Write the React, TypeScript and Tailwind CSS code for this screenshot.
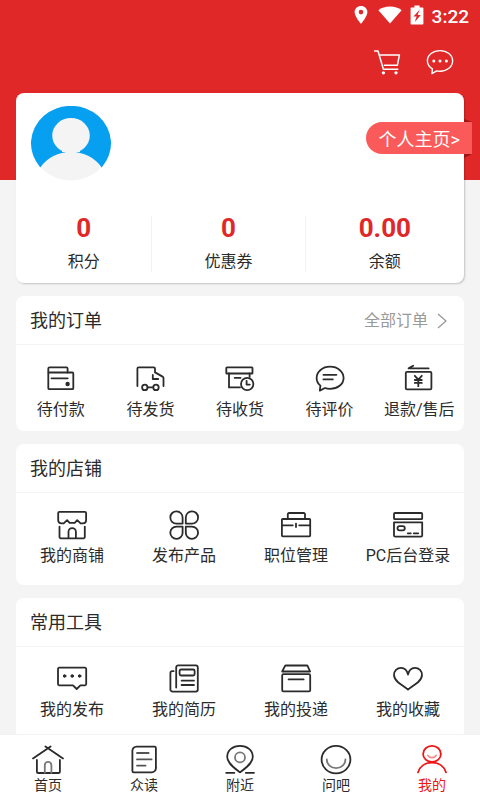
import React from 'react';

type Item = {
  label: string;
  icon: React.ReactNode;
};

const Icon = ({ children }: { children: React.ReactNode }) => (
  <svg
    viewBox="0 0 32 32"
    className="h-8 w-8 shrink-0"
    fill="none"
    stroke="currentColor"
    strokeWidth="1.8"
    strokeLinecap="round"
    strokeLinejoin="round"
    aria-hidden="true"
  >
    {children}
  </svg>
);

const stats = [
  { value: '0', label: '积分', width: 'flex-[136]' },
  { value: '0', label: '优惠券', width: 'flex-[153]' },
  { value: '0.00', label: '余额', width: 'flex-[159]' },
];

const orders: Item[] = [
  {
    label: '待付款',
    icon: (
      <Icon>
        <path d="M3.3 9.5V5.6a1.2 1.2 0 0 1 1.2-1.2h16.9a1.2 1.2 0 0 1 1.2 1.2v3.9" />
        <rect x="3.3" y="9.5" width="25" height="16.7" rx="1" />
        <path d="M6.5 15.3h16.2" />
        <circle cx="22.6" cy="21" r="1.3" fill="currentColor" />
      </Icon>
    ),
  },
  {
    label: '待发货',
    icon: (
      <Icon>
        <path d="M3.4 23V5.6a1.2 1.2 0 0 1 1.2-1.2h15.2A1.2 1.2 0 0 1 21 5.6v3.8l7.6 4.2a1.6 1.6 0 0 1 .9 1.4V23" />
        <path d="M18.8 12v4h5.4M13.6 24.4h5.6" />
        <circle cx="10.8" cy="24.4" r="2.7" />
        <circle cx="22" cy="24.4" r="2.7" />
      </Icon>
    ),
  },
  {
    label: '待收货',
    icon: (
      <Icon>
        <rect x="2.3" y="4.3" width="26.2" height="6.2" rx="0.6" />
        <path d="M5 10.5v13.9h11M25.6 10.5v3.4M10.6 14.8h6" />
        <circle cx="23.2" cy="21" r="6.2" />
        <path d="M22.6 18v3.6h3.2" />
      </Icon>
    ),
  },
  {
    label: '待评价',
    icon: (
      <Icon>
        <path d="M5.8 27.6l.6-5C3.9 20.6 2.6 17.9 2.6 15 2.6 8.6 8.6 3.7 16.1 3.7S29.6 8.6 29.6 15 23.6 25.8 16.1 25.8c-1.9 0-3.6-.2-5.1-.8z" />
        <path d="M9.4 11.8h13M9.4 16.4h9.4" />
      </Icon>
    ),
  },
  {
    label: '退款/售后',
    icon: (
      <Icon>
        <rect x="2.8" y="8.8" width="25.6" height="17.6" rx="1.2" />
        <path d="M25.6 5.4H5.6l4.6-2.7" />
        <path d="M11.8 12.8l3.5 3.8 3.5-3.8M11.8 17h7M11.8 19.9h7M15.3 16.6v6.6" />
      </Icon>
    ),
  },
];

const shop: Item[] = [
  {
    label: '我的商铺',
    icon: (
      <Icon>
        <path d="M2.2 4a1.2 1.2 0 0 1 1.2-1.2h25.5A1.2 1.2 0 0 1 30.1 4v7.2a3.3 3.3 0 0 1-3.3 3.2h-2.2l-3.4-3.2-2.5 2.7h-5.1l-2.5-2.7-3.4 3.2H5.5a3.3 3.3 0 0 1-3.3-3.2z" />
        <path d="M3.5 17.6v10.5a1.2 1.2 0 0 0 1.2 1.2h22.9a1.2 1.2 0 0 0 1.2-1.2V17.6M12.5 29.1v-6.3a3.7 3.7 0 0 1 7.4 0v6.3" />
      </Icon>
    ),
  },
  {
    label: '发布产品',
    icon: (
      <Icon>
        <path d="M14.6 14.6V8.7a6.15 6.15 0 1 0-6.15 5.9z" />
        <path d="M17.8 14.6V8.7a6.15 6.15 0 1 1 6.15 5.9z" />
        <path d="M14.6 17.6v5.9a6.15 6.15 0 1 1-6.15-5.9z" />
        <path d="M17.8 17.6v5.9a6.15 6.15 0 1 0 6.15-5.9z" />
      </Icon>
    ),
  },
  {
    label: '职位管理',
    icon: (
      <Icon>
        <path d="M7.8 10V5.2A1.2 1.2 0 0 1 9 4h14.8A1.2 1.2 0 0 1 25 5.2V10" />
        <rect x="1.9" y="10" width="28.3" height="17.4" rx="0.8" />
        <path d="M2 16.3h10.8M19.2 16.3h10.8M16 14.6v3.4" />
      </Icon>
    ),
  },
  {
    label: 'PC后台登录',
    icon: (
      <Icon>
        <rect x="2" y="4" width="28.2" height="6.2" rx="1" />
        <path d="M2 13.3h28.2v13.1a1.2 1.2 0 0 1-1.2 1.2H3.2A1.2 1.2 0 0 1 2 26.4z" />
        <rect x="5.5" y="17.2" width="7.3" height="4.2" rx="2.1" />
        <path d="M15.8 24.3h3M21.8 24.3h4.4" />
      </Icon>
    ),
  },
];

const tools: Item[] = [
  {
    label: '我的发布',
    icon: (
      <Icon>
        <path d="M3.2 4.7h25.8a1.2 1.2 0 0 1 1.2 1.2v15.2a1.2 1.2 0 0 1-1.2 1.2h-4.6L20.7 26 17 22.3H3.2A1.2 1.2 0 0 1 2 21.1V5.9a1.2 1.2 0 0 1 1.2-1.2z" />
        <g fill="currentColor" strokeWidth="1">
          <circle cx="8.6" cy="13" r="1.3" />
          <circle cx="16.2" cy="13" r="1.3" />
          <circle cx="23.6" cy="13" r="1.3" />
        </g>
      </Icon>
    ),
  },
  {
    label: '我的简历',
    icon: (
      <Icon>
        <path d="M8.2 24.6V4.4a2 2 0 0 1 2-2h17.6a2 2 0 0 1 2 2v22.2a2 2 0 0 1-2 2H4.6a2.2 2.2 0 0 1-2.2-2.2V10a1.8 1.8 0 0 1 1.8-1.8h1.4" />
        <rect x="11.6" y="6.5" width="15" height="6" rx="1.4" />
        <path d="M13.6 17.6h12.4M13.6 22h12.4" />
      </Icon>
    ),
  },
  {
    label: '我的投递',
    icon: (
      <Icon>
        <path d="M6 2.5h20.6a1.4 1.4 0 0 1 1.2.8l2.3 5.2H2.2l2.6-5.2A1.4 1.4 0 0 1 6 2.5z" />
        <rect x="2.2" y="11.2" width="28" height="17.2" rx="1.2" />
        <path d="M8.6 16.4h15" />
      </Icon>
    ),
  },
  {
    label: '我的收藏',
    icon: (
      <Icon>
        <path d="M16 11.6C15.2 7.6 12.6 4.8 9.1 4.8 5 4.8 2 8 2 12.1c0 3 1.6 5 4 7.1 3.2 2.8 6.6 4.5 10 7.5 3.4-3 6.8-4.7 10-7.5 2.4-2.1 4-4.1 4-7.1 0-4.1-3-7.3-7.1-7.3-3.5 0-6.1 2.8-6.9 6.8z" />
      </Icon>
    ),
  },
];

const tabs: Item[] = [
  {
    label: '首页',
    icon: (
      <Icon>
        <path d="M1 14.4L18.6 2.4M31 14.4L13.4 2.4" />
        <path d="M4.9 16v11.4a1.6 1.6 0 0 0 1.6 1.6h19.8a1.6 1.6 0 0 0 1.6-1.6V16" />
        <path d="M12.8 28.8v-7.6a3.3 3.3 0 0 1 6.6 0v7.6" stroke="#777" />
      </Icon>
    ),
  },
  {
    label: '众读',
    icon: (
      <Icon>
        <path d="M8.6 2.6h18a1.3 1.3 0 0 1 1.3 1.3v20a4.2 4.2 0 0 1-4.2 4.4h-18a1.3 1.3 0 0 1-1.3-1.3V7a4.2 4.2 0 0 1 4.2-4.4z" />
        <path d="M9 9h11.6M9 15.4h14.6M9 21.6h8.6" stroke="#555" />
      </Icon>
    ),
  },
  {
    label: '附近',
    icon: (
      <Icon>
        <path d="M16 28.4C11 24.4 3.2 19.4 3.2 12.8 3.2 6.2 8.8 1.9 16 1.9s12.8 4.3 12.8 10.9c0 6.6-7.8 11.6-12.8 15.6z" />
        <circle cx="16" cy="13.4" r="5" stroke="#777" />
        <path d="M2.2 28.8h8.2M21.8 28.8H30" />
      </Icon>
    ),
  },
  {
    label: '问吧',
    icon: (
      <Icon>
        <ellipse cx="16" cy="15.6" rx="14.4" ry="13.7" />
        <path d="M6.8 15.4c0 5 4 8.8 9.3 8.8s9.3-3.8 9.3-8.8" stroke="#777" />
      </Icon>
    ),
  },
  {
    label: '我的',
    icon: (
      <Icon>
        <ellipse cx="16" cy="9.9" rx="8.9" ry="8" />
        <path d="M2 28.4C3.8 22.4 9.2 18.6 16 18.6s12.2 3.8 14 9.8" />
        <path d="M11.8 11.4c1.8 3 6.6 3 8.4 0" stroke="#f58a8a" />
      </Icon>
    ),
  },
];

const StatusBar = () => (
  <div className="flex h-[30px] items-center justify-end pr-[11px]">
    <svg viewBox="0 0 14 20" className="mr-[10px] h-5 w-[14px]" fill="#fff" aria-hidden="true">
      <path
        fillRule="evenodd"
        d="M7 1C3.4 1 .6 3.6.6 7.1.6 11.6 7 19 7 19s6.4-7.4 6.4-11.9C13.4 3.6 10.6 1 7 1zm0 8.4a2.3 2.3 0 1 1 0-4.6 2.3 2.3 0 0 1 0 4.6z"
      />
    </svg>
    <svg viewBox="0 0 24 20" className="mr-2 h-5 w-6" fill="#fff" aria-hidden="true">
      <path d="M12 18.6L.4 5.2C3.4 2.9 7.4 1.6 12 1.6s8.6 1.3 11.6 3.6z" />
    </svg>
    <svg viewBox="0 0 14 20" className="mr-2 h-5 w-[14px]" fill="#fff" aria-hidden="true">
      <path
        fillRule="evenodd"
        d="M4.4.6h5.2v2h2.8c.6 0 1 .4 1 1v14.8c0 .6-.4 1-1 1H1.6c-.6 0-1-.4-1-1V3.6c0-.6.4-1 1-1h2.8zM9.6 4.8L3.4 11.6h3.2l-1.8 5.4 6-7H7.6z"
      />
    </svg>
    <span className="pt-[3px] text-[19px] font-medium leading-6 text-white">3:22</span>
  </div>
);

const Section = ({ title, extra, children }: { title: string; extra?: React.ReactNode; children: React.ReactNode }) => (
  <section className="rounded-lg bg-white">
    <div className="flex h-[49px] items-center justify-between border-b border-[#f4f4f4] pl-[14px] pr-4 pt-px">
      <h2 className="text-lg leading-6">{title}</h2>
      {extra}
    </div>
    {children}
  </section>
);

const MenuItem = ({ item }: { item: Item }) => (
  <button type="button" className="flex flex-col items-center gap-[3px] whitespace-nowrap">
    {item.icon}
    <span className="text-base leading-6">{item.label}</span>
  </button>
);

const App = () => {
  return (
    <div className="flex h-screen flex-col bg-[#f4f4f4] font-[Roboto,'Noto_Sans_CJK_SC',sans-serif] text-[#2b2b2b]">
      <header className="bg-[#e02828] pb-[87px]">
        <StatusBar />
        <div className="flex h-[63px] items-center justify-end gap-[25px] pr-[26px]">
          <button type="button" aria-label="购物车">
            <svg viewBox="0 0 28 26" className="h-[26px] w-7" fill="none" stroke="#fff" strokeWidth="1.5" strokeLinecap="round" strokeLinejoin="round">
              <path d="M1.6 2H5l5.4 18.2h14.4M6.2 6h20.2l-2 10.2H11.4" />
              <circle cx="10.4" cy="23.8" r="0.9" fill="#fff" />
              <circle cx="23" cy="23.8" r="0.9" fill="#fff" />
            </svg>
          </button>
          <button type="button" aria-label="消息">
            <svg viewBox="0 0 28 26" className="h-[26px] w-7" fill="none" stroke="#fff" strokeWidth="1.4" strokeLinejoin="round">
              <path d="M6 24.6l.4-4.8C3.2 17.8 1.4 15 1.4 11.9 1.4 6 7 1.6 14 1.6S26.6 6 26.6 11.9 21 22.2 14 22.2c-1.2 0-2.3-.1-3.3-.3z" />
              <g fill="#fff" stroke="none">
                <circle cx="7.8" cy="12" r="1.5" />
                <circle cx="14" cy="12" r="1.5" />
                <circle cx="20.4" cy="12" r="1.5" />
              </g>
            </svg>
          </button>
        </div>
      </header>

      <main className="-mt-[87px] flex min-h-0 flex-1 flex-col gap-[13px] overflow-y-auto px-4 [scrollbar-width:none]">
        <section className="shrink-0 rounded-lg bg-white pb-[11px] shadow-[1px_1px_2px_rgba(0,0,0,0.2)]">
          <div className="flex items-start justify-between pl-[15px] pt-[13px]">
            <svg viewBox="0 0 80 75" className="h-[75px] w-20" role="img" aria-label="头像">
              <ellipse cx="40" cy="37.5" rx="39.5" ry="37" fill="#f4f4f4" />
              <path d="M9.3 61.4A40 37.5 0 1 1 70.7 61.4A36 32.5 0 0 0 9.3 61.4z" fill="#079ff0" />
              <ellipse cx="40" cy="29.6" rx="18.8" ry="17.6" fill="#f4f4f4" />
              <path d="M31 42h18v4H31z" fill="#f4f4f4" />
            </svg>
            <div className="-mr-2 mt-[13px] flex flex-col items-end">
              <svg viewBox="0 0 8 3" className="h-[3px] w-2" aria-hidden="true">
                <path d="M0 0l8 3H0z" fill="#9c1414" />
              </svg>
              <a href="#profile" className="flex h-8 items-center rounded-l-full bg-[#fb5a5a] pl-[13px] pr-3 pt-[3px] text-lg text-white">
                个人主页&gt;
              </a>
              <svg viewBox="0 0 8 4" className="h-1 w-2" aria-hidden="true">
                <path d="M0 0h8L0 4z" fill="#9c1414" />
              </svg>
            </div>
          </div>
          <div className="mt-[35px] flex">
            {stats.map((stat) => (
              <div
                key={stat.label}
                className={`${stat.width} flex h-14 flex-col items-center justify-between border-r border-[#f2f2f2] last:border-r-0`}
              >
                <span className="text-[26px] font-bold leading-6 text-[#e02828]">{stat.value}</span>
                <span className="text-base leading-5">{stat.label}</span>
              </div>
            ))}
          </div>
        </section>

        <Section
          title="我的订单"
          extra={
            <a href="#orders" className="flex items-center gap-2 text-base text-[#999]">
              全部订单
              <svg viewBox="0 0 12 18" className="h-[18px] w-3" fill="none" stroke="#999" strokeWidth="1.3" aria-hidden="true">
                <path d="M2 2l8 7-8 7" />
              </svg>
            </a>
          }
        >
          <div className="grid grid-cols-5 pb-[9px] pt-[18px]">
            {orders.map((item) => (
              <MenuItem key={item.label} item={item} />
            ))}
          </div>
        </Section>

        <Section title="我的店铺">
          <div className="grid grid-cols-4 pb-[17px] pt-4">
            {shop.map((item) => (
              <MenuItem key={item.label} item={item} />
            ))}
          </div>
        </Section>

        <Section title="常用工具">
          <div className="grid grid-cols-4 pb-[17px] pt-4">
            {tools.map((item) => (
              <MenuItem key={item.label} item={item} />
            ))}
          </div>
        </Section>
      </main>

      <nav className="grid h-[66px] shrink-0 grid-cols-5 border-t border-[#f2f2f2] bg-white">
        {tabs.map((tab) => (
          <a
            key={tab.label}
            href="#tab"
            aria-current={tab.label === '我的' ? 'page' : undefined}
            className="flex flex-col items-center pt-[9px] aria-[current=page]:text-[#f01414]"
          >
            {tab.icon}
            <span className="text-sm leading-[18px]">{tab.label}</span>
          </a>
        ))}
      </nav>
    </div>
  );
};

export default App;
